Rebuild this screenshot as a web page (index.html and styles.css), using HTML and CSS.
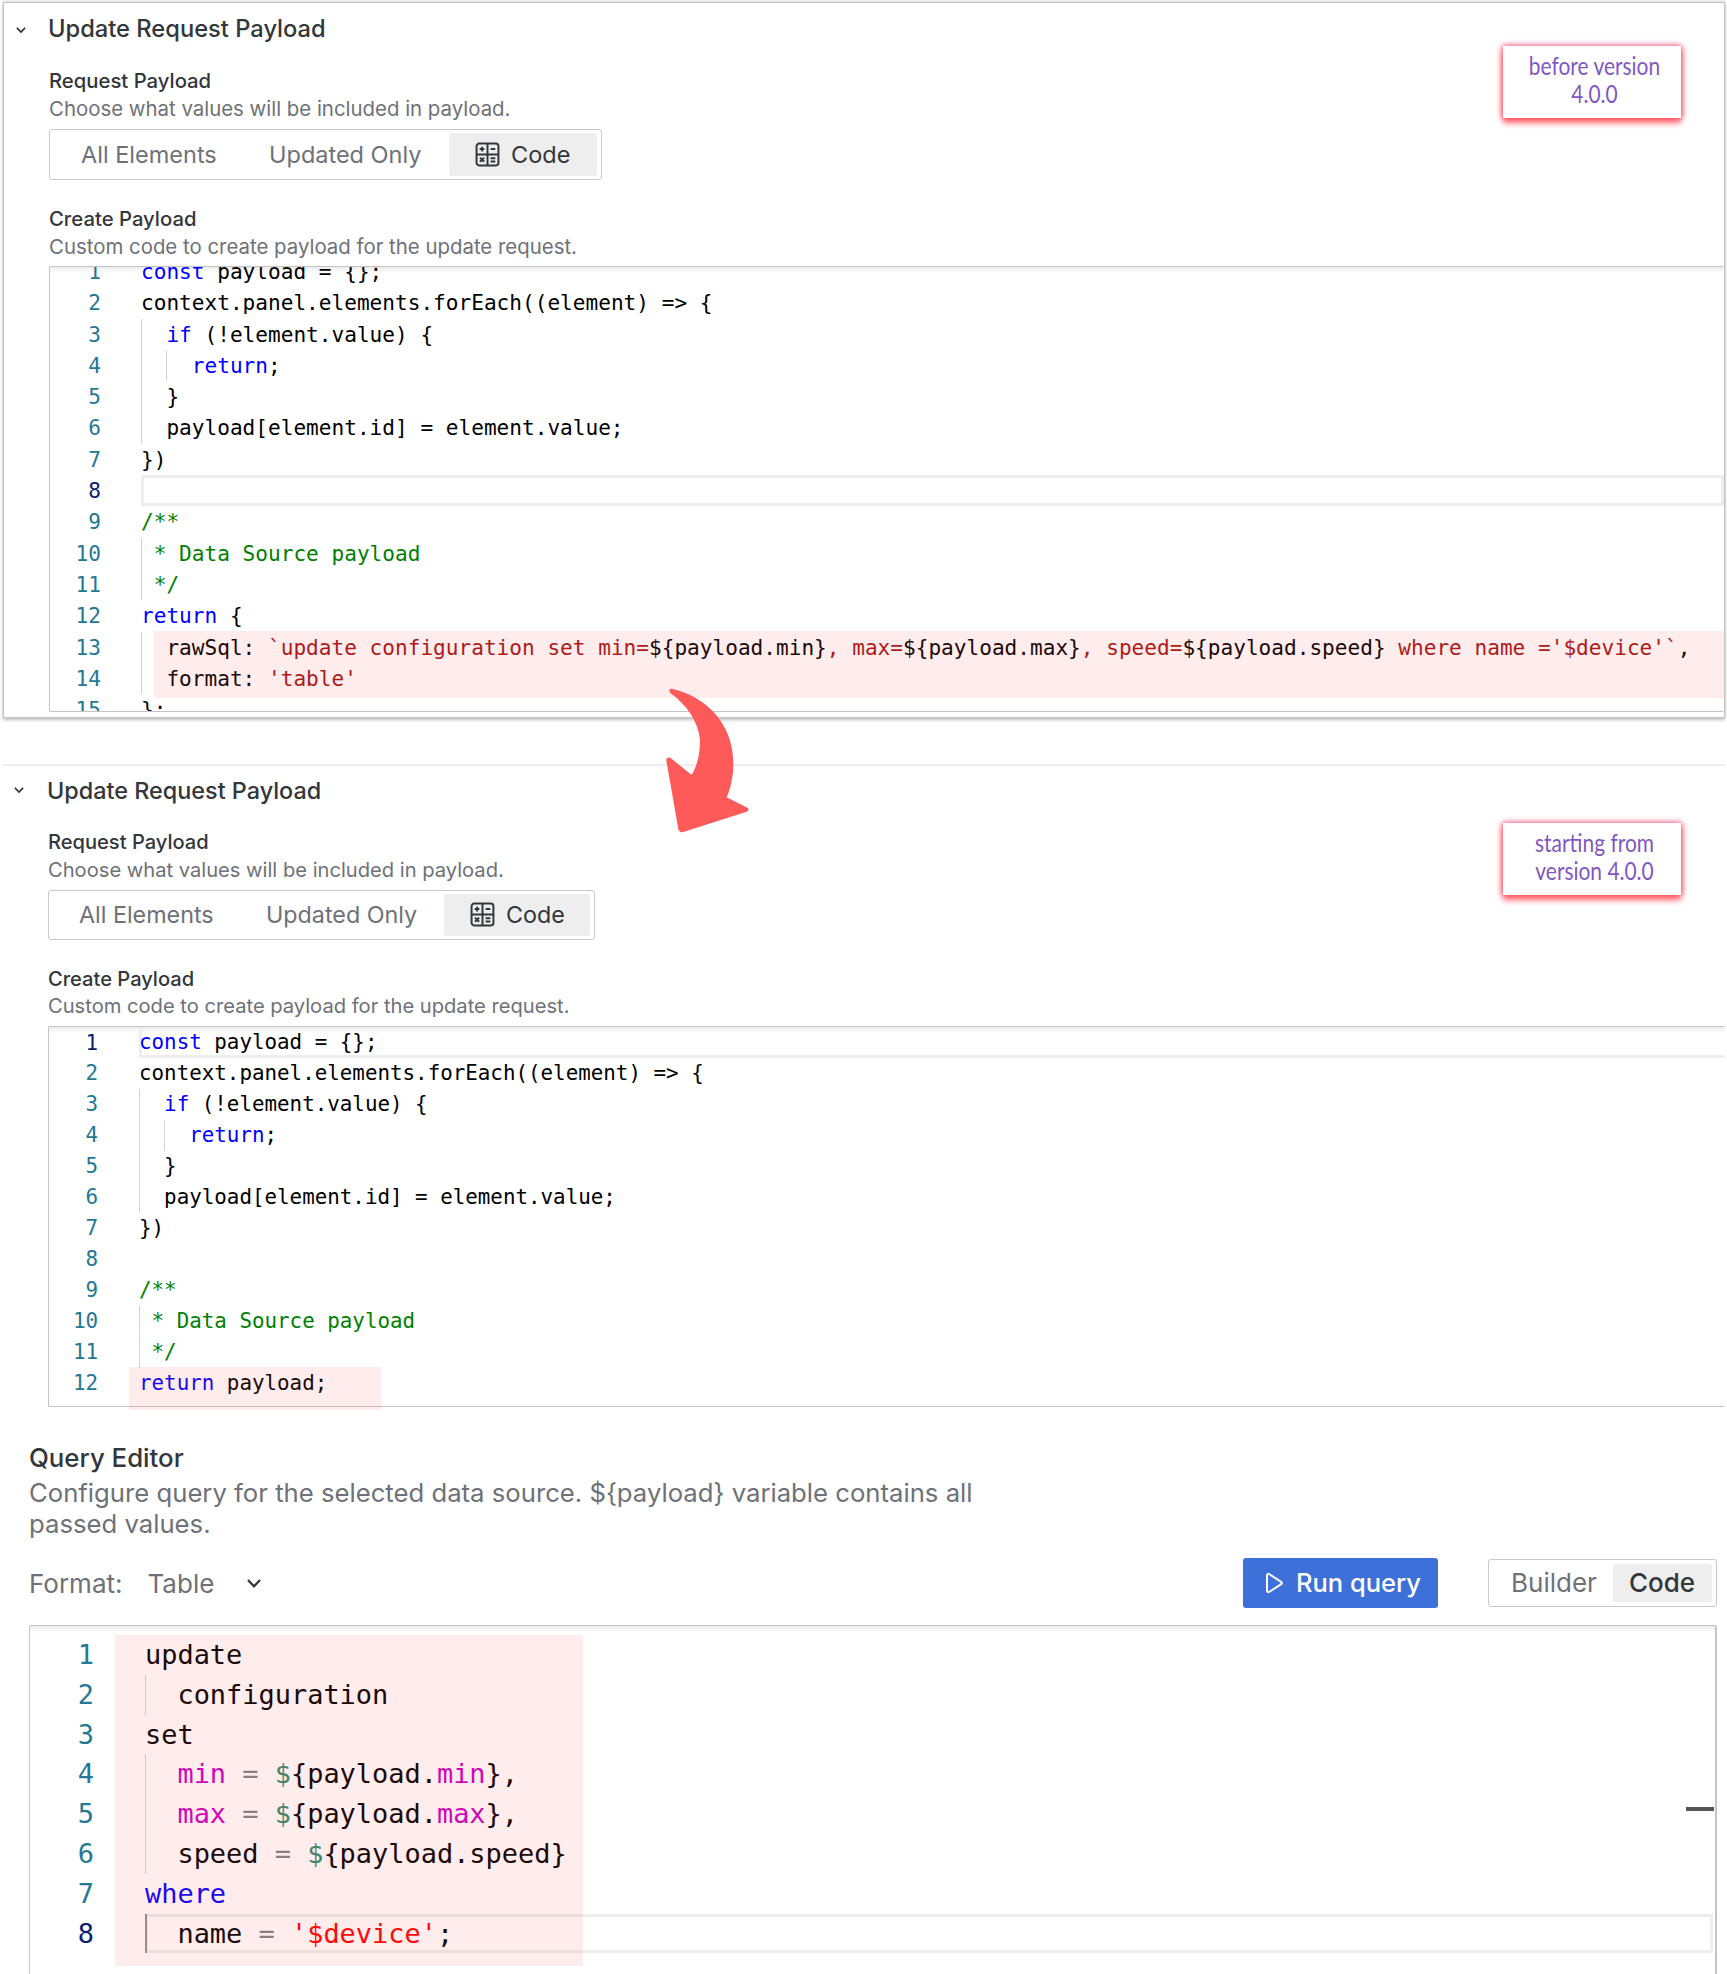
FILE: index.html
```
<!DOCTYPE html>
<html lang="en">
<head>
<meta charset="utf-8">
<title>Update Request Payload</title>
<link rel="stylesheet" href="styles.css">
</head>
<body>
<div class="page">

<section class="panel panel--before">
  <div class="head">
    <svg class="chev" viewBox="0 0 12 12"><path d="M2.5 4.2 6 7.8l3.5-3.6"/></svg>
    <h2 class="title">Update Request Payload</h2>
  </div>
  <div class="body">
    <div class="label">Request Payload</div>
    <div class="desc">Choose what values will be included in payload.</div>
    <div class="radio">
      <span class="opt opt--all">All Elements</span>
      <span class="opt opt--upd">Updated Only</span>
      <span class="opt opt--on">
        <svg class="calc" viewBox="0 0 24 24"><rect x="1.5" y="1.5" width="21" height="21" rx="2.5"/><path d="M12 1.5v21M1.5 12h21M4.5 6.8h4.5M6.8 4.5v4.5M15 6.8h4.5M4.8 15l4 4M8.8 15l-4 4M15 15.5h4.5M15 18.7h4.5"/></svg>
        Code
      </span>
    </div>
    <div class="label label--gap">Create Payload</div>
    <div class="desc">Custom code to create payload for the update request.</div>
    <div class="code code--before">
      <div class="lines">
        <div class="row"><span class="num">1</span><span class="src"><b class="k">const</b> payload = {};</span></div>
        <div class="row"><span class="num">2</span><span class="src">context.panel.elements.forEach((element) =&gt; {</span></div>
        <div class="row"><span class="num">3</span><span class="src"><i class="ind"></i><b class="k">if</b> (!element.value) {</span></div>
        <div class="row"><span class="num">4</span><span class="src"><i class="ind"></i><i class="ind"></i><b class="k">return</b>;</span></div>
        <div class="row"><span class="num">5</span><span class="src"><i class="ind"></i>}</span></div>
        <div class="row"><span class="num">6</span><span class="src"><i class="ind"></i>payload[element.id] = element.value;</span></div>
        <div class="row"><span class="num">7</span><span class="src">})</span></div>
        <div class="row row--cur"><span class="num">8</span><span class="src"></span></div>
        <div class="row"><span class="num">9</span><span class="src"><b class="c">/**</b></span></div>
        <div class="row"><span class="num">10</span><span class="src"><i class="ind ind--one"></i><b class="c">* Data Source payload</b></span></div>
        <div class="row"><span class="num">11</span><span class="src"><i class="ind ind--one"></i><b class="c">*/</b></span></div>
        <div class="row"><span class="num">12</span><span class="src"><b class="k">return</b> {</span></div>
        <div class="row"><span class="num">13</span><span class="src"><i class="ind"></i>rawSql: <b class="s">`update configuration set min=</b>${payload.min}<b class="s">, max=</b>${payload.max}<b class="s">, speed=</b>${payload.speed} <b class="s">where name ='$device'`</b>,</span></div>
        <div class="row"><span class="num">14</span><span class="src"><i class="ind"></i>format: <b class="s">'table'</b></span></div>
        <div class="row"><span class="num">15</span><span class="src">};</span></div>
      </div>
      <div class="mark mark--sql"></div>
    </div>
  </div>
</section>

<section class="panel panel--after">
  <div class="head">
    <svg class="chev" viewBox="0 0 12 12"><path d="M2.5 4.2 6 7.8l3.5-3.6"/></svg>
    <h2 class="title">Update Request Payload</h2>
  </div>
  <div class="body">
    <div class="label">Request Payload</div>
    <div class="desc">Choose what values will be included in payload.</div>
    <div class="radio">
      <span class="opt opt--all">All Elements</span>
      <span class="opt opt--upd">Updated Only</span>
      <span class="opt opt--on">
        <svg class="calc" viewBox="0 0 24 24"><rect x="1.5" y="1.5" width="21" height="21" rx="2.5"/><path d="M12 1.5v21M1.5 12h21M4.5 6.8h4.5M6.8 4.5v4.5M15 6.8h4.5M4.8 15l4 4M8.8 15l-4 4M15 15.5h4.5M15 18.7h4.5"/></svg>
        Code
      </span>
    </div>
    <div class="label label--gap">Create Payload</div>
    <div class="desc">Custom code to create payload for the update request.</div>
    <div class="code code--after">
      <div class="lines">
        <div class="row row--top"><span class="num num--cur">1</span><span class="src"><b class="k">const</b> payload = {};</span></div>
        <div class="row"><span class="num">2</span><span class="src">context.panel.elements.forEach((element) =&gt; {</span></div>
        <div class="row"><span class="num">3</span><span class="src"><i class="ind"></i><b class="k">if</b> (!element.value) {</span></div>
        <div class="row"><span class="num">4</span><span class="src"><i class="ind"></i><i class="ind"></i><b class="k">return</b>;</span></div>
        <div class="row"><span class="num">5</span><span class="src"><i class="ind"></i>}</span></div>
        <div class="row"><span class="num">6</span><span class="src"><i class="ind"></i>payload[element.id] = element.value;</span></div>
        <div class="row"><span class="num">7</span><span class="src">})</span></div>
        <div class="row"><span class="num">8</span><span class="src"></span></div>
        <div class="row"><span class="num">9</span><span class="src"><b class="c">/**</b></span></div>
        <div class="row"><span class="num">10</span><span class="src"><i class="ind ind--one"></i><b class="c">* Data Source payload</b></span></div>
        <div class="row"><span class="num">11</span><span class="src"><i class="ind ind--one"></i><b class="c">*/</b></span></div>
        <div class="row"><span class="num">12</span><span class="src"><b class="k">return</b> payload;</span></div>
      </div>
      <div class="mark mark--ret"></div>
    </div>
  </div>
</section>

<section class="query">
  <div class="qlabel">Query Editor</div>
  <p class="qdesc">Configure query for the selected data source. ${payload} variable contains all passed values.</p>
  <div class="toolbar">
    <span class="fmt">Format:</span>
    <span class="fmt-val">Table</span>
    <svg class="fmt-chev" viewBox="0 0 12 12"><path d="M2 4 6 8.2 10 4"/></svg>
    <button class="run" type="button">
      <svg class="play" viewBox="0 0 24 24"><path d="M6 4.2c0-1.1 1.1-1.7 2-1.2l12.2 7.8c.9.6.9 1.8 0 2.4L8 21c-.9.5-2-.1-2-1.2z"/></svg>
      Run query
    </button>
    <div class="radio radio--q">
      <span class="opt opt--b">Builder</span>
      <span class="opt opt--on opt--c">Code</span>
    </div>
  </div>
  <div class="code code--editor">
    <div class="lines">
      <div class="row"><span class="num">1</span><span class="src">update</span></div>
      <div class="row"><span class="num">2</span><span class="src"><i class="ind"></i>configuration</span></div>
      <div class="row"><span class="num">3</span><span class="src">set</span></div>
      <div class="row"><span class="num">4</span><span class="src"><i class="ind"></i><b class="m">min</b> <b class="o">=</b> <b class="d">$</b>{payload.<b class="m">min</b>},</span></div>
      <div class="row"><span class="num">5</span><span class="src"><i class="ind"></i><b class="m">max</b> <b class="o">=</b> <b class="d">$</b>{payload.<b class="m">max</b>},</span></div>
      <div class="row"><span class="num">6</span><span class="src"><i class="ind"></i>speed <b class="o">=</b> <b class="d">$</b>{payload.speed}</span></div>
      <div class="row"><span class="num">7</span><span class="src"><b class="k">where</b></span></div>
      <div class="row row--cur"><span class="num num--cur">8</span><span class="src"><i class="ind ind--active"></i>name <b class="o">=</b> <b class="r">'$device'</b>;</span></div>
    </div>
    <div class="mark mark--query"></div>
    <div class="ruler"></div>
  </div>
</section>

<aside class="note note--before"><span class="note-text">before version<br>4.0.0</span></aside>
<aside class="note note--after"><span class="note-text">starting from<br>version 4.0.0</span></aside>
<svg class="arrow" viewBox="0 0 1200 720"><path d="M815 146C905 165 1000 240 1000 370C1000 410 992 445 980 472L1042 503C1048 507 1046 512 1040 515L850 576C842 578 836 574 835 567L799 362C798 354 806 350 813 355L875 405C895 370 900 335 900 300C895 245 860 195 812 160C805 153 808 145 815 146Z"/></svg>

</div>
</body>
</html>
```
FILE: styles.css
```
* { box-sizing: border-box; }
html, body { margin: 0; padding: 0; background: #fff; }
body { font-family: Inter, "Noto Sans", sans-serif; overflow: hidden; }
.page { position: relative; width: 1727px; height: 1974px; padding-top: 2px; overflow: hidden; }

.panel { margin-left: 3px; width: 1722px; }
.panel--before {
  --title: 23.7px; --label: 20.3px; --desc: 20.4px; --opt: 23.5px;
  --fs: 21.1px; --lh: 31.3px; --numw: 51px; --gap: 40px;
  height: 716px;
  border: 1px solid #c4c4c4;
  box-shadow: 0 2px 3px rgba(0,0,0,.25), 0 -1px 2px rgba(0,0,0,.15);
}
.panel--after {
  --title: 23.4px; --label: 20.1px; --desc: 20.15px; --opt: 23.3px;
  --fs: 20.85px; --lh: 30.95px; --numw: 49px; --gap: 41px;
  margin-top: 46px;
  height: 642px;
  border-top: 2px solid #eee;
}

.head { display: flex; align-items: center; height: 52px; position: relative; }
.panel--before .head { padding-left: 44px; }
.panel--after .head { padding-left: 44px; height: 50px; }
.chev { position: absolute; left: 10px; top: 20px; width: 14px; height: 14px; fill: none; stroke: #33363b; stroke-width: 1.5; }
.panel--after .chev { left: 9px; top: 17px; }
.title { margin: 0; font-size: var(--title); font-weight: 500; color: #33363b; line-height: 28px; }

.body { margin-left: 45px; padding-top: 12px; }
.panel--after .body { margin-left: 45px; padding-top: 12px; }
.label { font-size: var(--label); font-weight: 500; color: #33363b; line-height: 28px; }
.label--gap { margin-top: 25px; }
.desc { font-size: var(--desc); color: #6e7178; line-height: 28px; }
.panel--after .label--gap { margin-top: 25px; }
.panel--after .label--gap + .desc { margin-top: -1px; }

.radio {
  display: flex; align-items: stretch; margin-top: 6px; padding: 3px 4px;
  width: 553px; height: 51px; border: 1px solid #c8c9cb; border-radius: 3px;
}
.panel--after .radio { margin-top: 6px; width: 547px; height: 50px; }
.opt { display: flex; align-items: center; font-size: var(--opt); color: #6e7178; white-space: nowrap; padding-bottom: 1px; }
.opt--all { padding-left: 27px; width: 215px; }
.opt--upd { width: 180px; }
.opt--on { background: #eee; color: #33363b; border-radius: 2px; flex: 1; padding-left: 26px; gap: 11px; }
.panel--after .opt--all { padding-left: 26px; width: 213px; }
.panel--after .opt--upd { width: 178px; }
.panel--after .opt--on { padding-left: 26px; }
.calc { width: 25px; height: 25px; fill: none; stroke: #33363b; stroke-width: 1.9; flex: none; }

.code { position: relative; border: 1px solid #c4c4c4; border-radius: 2px; font-family: "DejaVu Sans Mono", "Liberation Mono", monospace; font-size: var(--fs); color: #000; }
.code::before { content: ""; position: absolute; left: 0; right: 0; top: 0; height: 6px; background: linear-gradient(#ececec, #fff); }
.code--before { margin-top: 5px; height: 446px; overflow: hidden; border-right: 0; }
.code--after { margin-top: 6px; height: 381px; border-right: 0; }
.code--before .lines { margin-top: -11px; }
.code--after .lines { margin-top: .5px; }
.lines { position: relative; }
.row { display: flex; height: var(--lh); line-height: var(--lh); }
.num { width: var(--numw); text-align: right; color: #237893; flex: none; }
.num--cur { color: #0b216f; }
.row--cur .num { color: #0b216f; }
.src { flex: 1; margin-left: var(--gap); white-space: pre; position: relative; }
.row--cur .src { box-shadow: inset 0 0 0 3px #eee; }
.row--top .src { box-shadow: inset 0 -3px 0 #eee, inset 3px 0 0 #eee; margin-top: -1px; }
.ind { display: inline-block; width: 2ch; height: var(--lh); border-left: 1px solid #d3d3d3; vertical-align: top; }
.ind--one { width: 1ch; }
.ind--active { border-left: 2px solid #939393; }
.src b { font-weight: 400; }
.k { color: #00f; }
.c { color: #008000; }
.s { color: #a31515; }
.m { color: #c700c7; }
.o { color: #808080; }
.d { color: #2e8b6f; }
.r { color: #f00; }

.mark { position: absolute; background: rgba(255,80,80,.11); pointer-events: none; }
.mark--sql { left: 104px; right: 0; top: 364px; height: 67px; }
.mark--ret { left: 80px; width: 252px; top: 340px; height: 43px; }
.mark--query { left: 85px; width: 468px; top: 9px; height: 331px; }

.query { margin: 0 0 0 29px; padding-top: 36px; }
.qlabel { font-size: 25.8px; font-weight: 500; color: #33363b; line-height: 32px; }
.qdesc { margin: 4px 0 0; width: 1000px; font-size: 25.7px; line-height: 30.5px; color: #6e7178; }
.toolbar { display: flex; align-items: center; height: 50px; margin-top: 19px; width: 1688px; font-size: 26px; color: #6e7178; }
.fmt-val { margin-left: 25px; }
.fmt-chev { margin-left: 31px; width: 18px; height: 18px; fill: none; stroke: #33363b; stroke-width: 1.5; }
.run {
  display: flex; align-items: center; gap: 11px; margin-left: auto; width: 195px; height: 50px; padding: 0 0 1px 18px;
  border: 0; border-radius: 3px; background: #3d71d9; color: #fff; font: 500 25.5px Inter, sans-serif;
}
.play { width: 24px; height: 26px; fill: none; stroke: #fff; stroke-width: 2; }
.radio--q { margin: 0 0 0 50px; width: 229px; height: 48px; padding: 4px; }
.radio--q .opt { font-size: 26px; }
.opt--b { width: 120px; padding-left: 18px; }
.radio--q .opt--c { flex: 1; padding-left: 16px; font-weight: 500; }

.code--editor { --fs: 26.95px; --lh: 39.8px; --numw: 64px; --gap: 51px; margin-top: 17px; width: 1688px; height: 360px; border-bottom: 0; border-right: 2px solid #c4c4c4; }
.code--editor .lines { padding-top: 9px; padding-right: 2px; }
.ruler { position: absolute; right: 1px; top: 181px; width: 28px; height: 4px; background: #555; }

.note {
  position: absolute; left: 1503px; width: 178px; height: 72px; padding: 5px 0 0 5px;
  background: #fff; text-align: center; color: #7e57c2;
  font-family: Lato, "Liberation Sans", sans-serif; font-size: 25.5px; line-height: 28.4px;
  box-shadow: 0 5px 6px rgba(255,70,80,.8), -2px 0 5px rgba(255,90,100,.6), 2px 0 5px rgba(255,90,100,.6), 0 -2px 5px rgba(220,160,220,.5);
}
.note-text { display: block; transform: scaleX(.82); white-space: nowrap; }
.note--before { top: 46px; }
.note--after { top: 823px; }
.arrow { position: absolute; left: 400px; top: 640px; width: 400px; height: 240px; fill: #ff5a5a; }
```
